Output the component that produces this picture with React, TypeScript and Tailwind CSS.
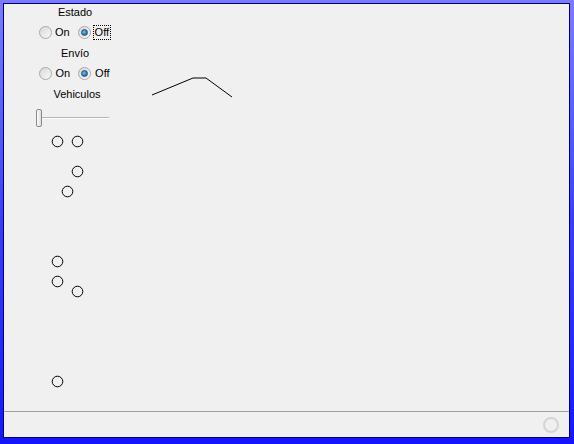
const circles = [
  [53, 137],
  [73, 137],
  [73, 167],
  [63, 187],
  [53, 257],
  [53, 277],
  [73, 287],
  [53, 377],
];

function Radio({ checked }: { checked?: boolean }) {
  return (
    <span className="flex h-[13px] w-[13px] items-center justify-center rounded-full border border-[#a8a8a8] bg-gradient-to-br from-[#d8d8d8] to-[#fafafa]">
      {checked && (
        <span className="h-[7px] w-[7px] rounded-full border border-[#1f4f7a] bg-[radial-gradient(circle_at_40%_40%,#6cc0ee,#0b4a86)]" />
      )}
    </span>
  );
}

function RadioGroup({ focused }: { focused?: boolean }) {
  return (
    <div className="flex items-center text-[11px] leading-[13px] text-black">
      <Radio />
      <span className="ml-[3px]">On</span>
      <span className="ml-[8px]">
        <Radio checked />
      </span>
      <span
        className={
          focused
            ? "ml-[2px] border border-dotted border-black px-[1px]"
            : "ml-[3px] border border-transparent px-0"
        }
      >
        Off
      </span>
    </div>
  );
}

export default function App() {
  return (
    <div
      className="h-[444px] w-[574px] bg-gradient-to-b from-[#7b7bff] via-[#3a3aff] to-[#1414ff] pb-[6px] pl-[3px] pr-[4px] pt-[3px]"
      style={{ fontFamily: '"Liberation Sans", Arial, sans-serif' }}
    >
      <div className="flex h-full flex-col border border-[#000070] bg-[#f0f0f0]">
        <div className="relative flex-1">
          <div className="flex w-[142px] flex-col items-center pt-[2px] text-[11px] leading-[13px] text-black">
            <span>Estado</span>
            <div className="mt-[6px]">
              <RadioGroup focused />
            </div>
            <span className="mt-[7px]">Envío</span>
            <div className="mt-[6px]">
              <RadioGroup />
            </div>
            <span className="ml-[4px] mt-[7px]">Vehiculos</span>
            <div className="mt-[8px] flex items-center self-start pl-[32px]">
              <span className="h-[18px] w-[6px] rounded-[2px] border border-[#8a8a8a] bg-gradient-to-r from-[#fdfdfd] to-[#dcdcdc]" />
              <span className="h-[2px] w-[67px] border-b border-white bg-[#b4b4b4]" />
            </div>
          </div>

          <svg className="absolute inset-0 h-full w-full" viewBox="0 0 565 407" fill="none">
            {circles.map(([cx, cy], i) => (
              <circle key={i} cx={cx + 0.5} cy={cy + 0.5} r="5.3" stroke="#000" strokeWidth="1" />
            ))}
            <polyline
              points="148,91 189,74 202,74 228,93"
              stroke="#000"
              strokeWidth="1"
            />
          </svg>
        </div>

        <div className="flex h-[26px] items-center justify-end border-t border-[#a0a0a0] bg-[#f0f0f0] pr-[10px]">
          <span className="h-[16px] w-[16px] rounded-full border-[2px] border-[#d4d4d4]" />
        </div>
      </div>
    </div>
  );
}
